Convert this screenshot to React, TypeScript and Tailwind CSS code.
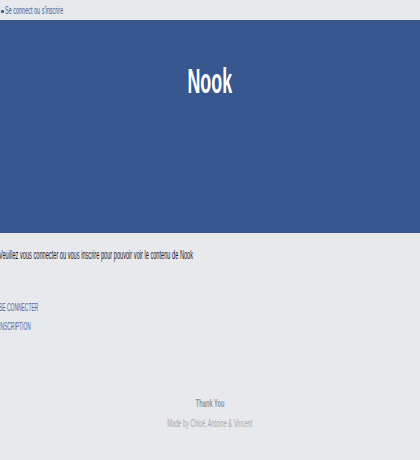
import React from 'react';

const font = { fontFamily: '"Liberation Sans", Arial, sans-serif' };

export default function App() {
  return (
    <div className="w-[420px] h-[460px] bg-[#e8e9ed] overflow-hidden" style={font}>
      {/* top nav */}
      <div className="h-5 flex items-center text-[11px] leading-none text-[#3d5a93]">
        <span className="ml-px mt-[2px] w-[3px] h-[3px] rounded-[1px] bg-[#3d5a93]" />
        <span className="ml-[1px] inline-block origin-left scale-x-[0.5] whitespace-nowrap">
          Se connect ou s'inscrire
        </span>
      </div>

      {/* hero */}
      <header className="h-[213px] bg-[#37578e] flex justify-center pt-[43px]">
        <h1 className="text-[35px] leading-none font-bold text-white inline-block h-[35px] scale-x-[0.51]">
          Nook
        </h1>
      </header>

      <main className="pt-[16px]">
        <p className="-ml-px text-[12px] leading-none text-[#1d2129] whitespace-nowrap origin-left scale-x-[0.47]">
          Veuillez vous connecter ou vous inscrire pour pouvoir voir le contenu de Nook
        </p>

        <nav className="mt-[41px] flex flex-col gap-[8px] text-[11px] leading-none text-[#4b67a1] uppercase">
          <a className="-ml-px block h-[11px] whitespace-nowrap origin-left scale-x-[0.45]">Se connecter</a>
          <a className="-ml-px block h-[11px] whitespace-nowrap origin-left scale-x-[0.45]">Inscription</a>
        </nav>
      </main>

      <footer className="mt-[67px] flex flex-col items-center text-[10px] leading-none">
        <span className="font-bold text-[#90949c] scale-x-[0.57] whitespace-nowrap">Thank You</span>
        <span className="mt-[10px] text-[#a4a7ad] scale-x-[0.56] whitespace-nowrap">
          Made by Chloé, Antoine &amp; Vincent
        </span>
      </footer>
    </div>
  );
}
